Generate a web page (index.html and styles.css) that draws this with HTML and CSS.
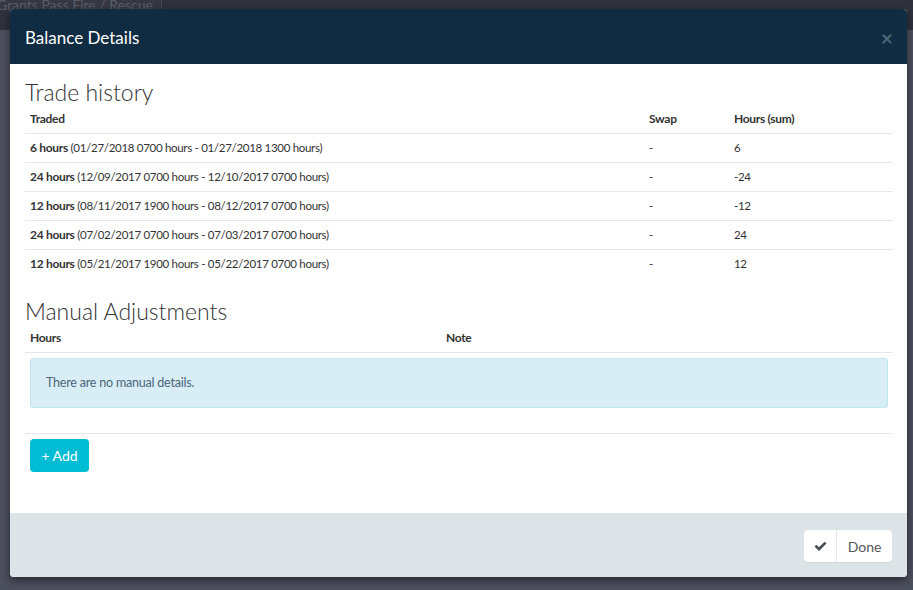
FILE: index.html
```html
<!DOCTYPE html>
<html>
<head>
<meta charset="utf-8">
<link rel="stylesheet" href="styles.css">
</head>
<body>
<div class="page">
  <div class="topbar"><span class="crumb">Grants Pass Fire / Rescue</span></div>
</div>
<div class="modal">
  <div class="modal-header">
    <h4 class="modal-title">Balance Details</h4>
    <span class="close">&times;</span>
  </div>
  <div class="modal-body">
    <h3>Trade history</h3>
    <table class="tbl">
      <thead>
        <tr><th>Traded</th><th class="c-swap">Swap</th><th class="c-hours">Hours (sum)</th></tr>
      </thead>
      <tbody>
        <tr><td><b>6 hours</b> (01/27/2018 0700 hours - 01/27/2018 1300 hours)</td><td>-</td><td>6</td></tr>
        <tr><td><b>24 hours</b> (12/09/2017 0700 hours - 12/10/2017 0700 hours)</td><td>-</td><td>-24</td></tr>
        <tr><td><b>12 hours</b> (08/11/2017 1900 hours - 08/12/2017 0700 hours)</td><td>-</td><td>-12</td></tr>
        <tr><td><b>24 hours</b> (07/02/2017 0700 hours - 07/03/2017 0700 hours)</td><td>-</td><td>24</td></tr>
        <tr><td><b>12 hours</b> (05/21/2017 1900 hours - 05/22/2017 0700 hours)</td><td>-</td><td>12</td></tr>
      </tbody>
    </table>
    <h3 class="second">Manual Adjustments</h3>
    <table class="tbl">
      <thead>
        <tr><th class="c-half">Hours</th><th>Note</th></tr>
      </thead>
      <tbody>
        <tr><td colspan="2" class="alert-cell"><div class="alert">There are no manual details.</div></td></tr>
      </tbody>
    </table>
    <hr>
    <button class="btn-add">+ Add</button>
  </div>
  <div class="modal-footer">
    <div class="btn-done">
      <span class="done-icon"><svg width="13" height="11" viewBox="0 0 13 11"><path d="M0.5 5.6 L2.4 3.7 L5 6.3 L10.6 0.7 L12.5 2.6 L5 10.1 Z" fill="#4a4f55"/></svg></span>
      <span class="done-label">Done</span>
    </div>
  </div>
</div>
</body>
</html>
```
FILE: styles.css
```css
* { box-sizing: border-box; }
html, body { margin: 0; padding: 0; }
body {
  width: 913px;
  height: 590px;
  overflow: hidden;
  background: #4c4f5c;
  font-family: "Source Sans Pro", Lato, "Noto Sans", sans-serif;
  position: relative;
}
.page { height: 590px; }
.topbar {
  height: 30px;
  background: #2f313d;
  overflow: hidden;
}
.crumb {
  display: inline-block;
  margin-left: -3px;
  height: 10px;
  line-height: 10px;
  font-size: 14px;
  color: #5a5d69;
  padding: 0 8px 0 0;
  border-right: 1px solid #444652;
  background: #363844;
  vertical-align: top;
}
.modal {
  position: absolute;
  left: 10px;
  top: 9px;
  width: 897px;
  height: 568px;
  background: #fff;
  border-radius: 4px;
  overflow: hidden;
  box-shadow: 0 3px 9px rgba(0,0,0,0.5);
  display: flex;
  flex-direction: column;
}
.modal-header {
  height: 55px;
  background: #0f2c42;
  display: flex;
  align-items: center;
  justify-content: space-between;
  padding: 0 15px;
}
.modal-title {
  margin: 0;
  color: #fff;
  font-size: 17px;
  font-weight: 400;
  padding-top: 1px;
}
.close {
  color: #4e6577;
  font-size: 21px;
  font-weight: 700;
  line-height: 1;
  margin-right: -1px;
  margin-top: 1px;
}
.modal-body {
  flex: 1;
  padding: 15px 14px 0 15px;
  color: #333;
}
h3 {
  margin: 0;
  font-size: 23px;
  font-weight: 300;
  line-height: 26px;
  color: #333;
}
h3.second { margin-top: 20px; }
.tbl {
  width: 100%;
  border-collapse: collapse;
  font-size: 11.5px;
  letter-spacing: -0.3px;
}
.tbl th {
  text-align: left;
  font-weight: 700;
  font-size: 12px;
  padding: 5px 5px;
  line-height: 18px;
  border-bottom: 1px solid #e4e7ea;
}
.tbl td {
  padding: 5px 5px;
  line-height: 18px;
  border-top: 1px solid #e4e7ea;
}
.tbl tbody tr:first-child td { border-top: none; }
.tbl td b { font-weight: 700; font-size: 12px; }
.c-swap { width: 85px; }
.c-hours { width: 164px; }
.c-half { width: 416px; }
.alert-cell { padding: 5px 5px 5px 5px !important; }
.alert {
  background: #d9edf7;
  border: 1px solid #bce6f1;
  border-radius: 3px;
  padding: 15px 15px;
  color: #4a6577;
  font-size: 12.5px;
  letter-spacing: -0.2px;
  line-height: 18px;
}
hr {
  border: 0;
  border-top: 1px solid #e6e9ec;
  margin: 20px 0 5px;
}
.btn-add {
  margin-left: 5px;
  width: 59px;
  height: 33px;
  border: none;
  border-radius: 4px;
  background: #00bcd4;
  color: #fff;
  font-family: inherit;
  font-size: 14px;
  padding: 0;
}
.modal-footer {
  height: 64px;
  background: #dde4e7;
  display: flex;
  justify-content: flex-end;
  align-items: center;
  padding: 0 15px;
}
.btn-done {
  display: flex;
  height: 32px;
  background: #fff;
  border-radius: 4px;
  box-shadow: 0 1px 1px rgba(0,0,0,0.06);
  margin-top: 2px;
}
.done-icon {
  width: 33px;
  display: flex;
  align-items: center;
  justify-content: center;
  border-right: 1px solid #e6e9eb;
}
.done-label {
  width: 55px;
  display: flex;
  align-items: center;
  justify-content: center;
  font-size: 14px;
  color: #555;
}
```
